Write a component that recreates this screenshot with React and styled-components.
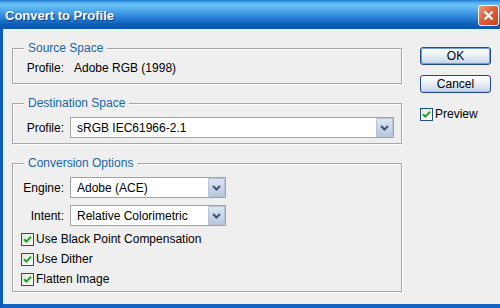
import React from "react";
import styled, { createGlobalStyle } from "styled-components";

const GlobalStyle = createGlobalStyle`
  html, body { margin: 0; padding: 0; background: #efefef; }
  body {
    font-family: "Liberation Sans", Arial, sans-serif;
    font-size: 12px;
    color: #000;
  }
  * { box-sizing: border-box; }
`;

const Window = styled.div`
  width: 500px;
  height: 308px;
  display: flex;
  flex-direction: column;
  overflow: hidden;
  background: #efefef;
`;

const TitleBar = styled.div`
  height: 29px;
  flex: none;
  display: flex;
  align-items: center;
  justify-content: space-between;
  padding: 1px 1px 0 5px;
  background: linear-gradient(
    #1f74d4 0px,
    #4aa6ea 2px,
    #6cc3f4 5px,
    #55b0ee 9px,
    #3b94e0 14px,
    #1f74cc 20px,
    #0c5cb6 25px,
    #0a55aa 29px
  );
`;

const Title = styled.span`
  color: #fff;
  font-weight: bold;
  font-size: 13px;
  letter-spacing: 0;
  text-shadow: 1px 1px 0 #0b3d82;
`;

const CloseButton = styled.div`
  width: 21px;
  height: 21px;
  border: 1px solid #f4f4f4;
  border-radius: 3px;
  background: linear-gradient(135deg, #f09a7e, #e0603e 45%, #c8431f);
  display: flex;
  align-items: center;
  justify-content: center;
  margin-top: 1px;
`;

const Frame = styled.div`
  flex: 1;
  display: flex;
  border-left: 3px solid #0a5cc0;
  border-bottom: 4px solid #1463c4;
  padding-left: 9px;
`;

const LeftCol = styled.div`
  width: 391px;
  padding-top: 19px;
  display: flex;
  flex-direction: column;
  gap: 19px;
`;

const Group = styled.div`
  position: relative;
  height: ${(p) => p.$h}px;
  width: 390px;
  border: 1px solid #a6a6a6;
  box-shadow: 1px 1px 0 #fff, inset 1px 1px 0 #fff;
  padding-top: ${(p) => p.$pt}px;
  padding-right: 7px;
  display: flex;
  flex-direction: column;
`;

const Legend = styled.span`
  position: absolute;
  top: -8px;
  left: 11px;
  padding: 0 4px;
  line-height: 14px;
  background: #efefef;
  color: #1668a8;
`;

const Row = styled.div`
  display: flex;
  align-items: center;
  margin-top: ${(p) => p.$mt || 0}px;
`;

const Label = styled.span`
  width: 51px;
  text-align: right;
  line-height: 14px;
  flex: none;
`;

const Value = styled.span`
  margin-left: 10px;
  line-height: 14px;
`;

const Select = styled.div`
  margin-left: 6px;
  width: ${(p) => p.$w}px;
  height: 21px;
  border: 1px solid #a3a3a3;
  background: #fff;
  display: flex;
  align-items: center;
  justify-content: space-between;
`;

const SelectText = styled.span`
  padding-left: 6px;
  line-height: 14px;
`;

const Arrow = styled.div`
  width: 17px;
  height: 19px;
  margin-right: 0px;
  border: 1px solid #b6c3d6;
  border-radius: 1px;
  background: linear-gradient(#dde6f3, #c6d3e6 60%, #b9c8de);
  display: flex;
  align-items: center;
  justify-content: center;
`;

const CheckList = styled.div`
  margin-top: 3px;
  padding-left: 8px;
  display: flex;
  flex-direction: column;
`;

const CheckRow = styled.label`
  height: 20px;
  display: flex;
  align-items: center;
  gap: 2px;
`;

const Box = styled.span`
  width: 13px;
  height: 13px;
  flex: none;
  border: 1px solid #1c5180;
  background: linear-gradient(135deg, #e4e4df, #fff);
  display: flex;
  align-items: center;
  justify-content: center;
`;

const RightCol = styled.div`
  margin-left: 17px;
  width: 72px;
  padding-top: 18px;
  display: flex;
  flex-direction: column;
  gap: 10px;
`;

const Button = styled.div`
  width: 71px;
  height: 18px;
  border: 1px solid #1d4c8c;
  border-radius: 3px;
  background: linear-gradient(#ffffff, #f1f4f9 35%, #d9e3f0 70%, #c3d2e8);
  box-shadow: ${(p) =>
    p.$default ? "inset 0 0 0 1px #6d9fe0" : "inset 0 -1px 0 #b3c4de"};
  display: flex;
  align-items: center;
  justify-content: center;
  line-height: 14px;
`;

const PreviewRow = styled(CheckRow)`
  margin-top: 1px;
`;

const Chevron = () => (
  <svg width="9" height="6" viewBox="0 0 9 6">
    <path d="M1 1 L4.5 4.5 L8 1" fill="none" stroke="#3c5278" strokeWidth="2" />
  </svg>
);

const Check = () => (
  <svg width="9" height="9" viewBox="0 0 9 9">
    <path d="M1 4.2 L3.3 6.6 L8 1.6" fill="none" stroke="#1ea31e" strokeWidth="2" />
  </svg>
);

const Checkbox = ({ children }) => (
  <CheckRow>
    <Box>
      <Check />
    </Box>
    <span>{children}</span>
  </CheckRow>
);

const Dropdown = ({ w, children }) => (
  <Select $w={w}>
    <SelectText>{children}</SelectText>
    <Arrow>
      <Chevron />
    </Arrow>
  </Select>
);

export default function App() {
  return (
    <>
      <GlobalStyle />
      <Window>
        <TitleBar>
          <Title>Convert to Profile</Title>
          <CloseButton>
            <svg width="11" height="11" viewBox="0 0 11 11">
              <path d="M1.5 1.5 L9.5 9.5 M9.5 1.5 L1.5 9.5" stroke="#fff" strokeWidth="2.2" />
            </svg>
          </CloseButton>
        </TitleBar>
        <Frame>
          <LeftCol>
            <Group $h={36} $pt={12}>
              <Legend>Source Space</Legend>
              <Row>
                <Label>Profile:</Label>
                <Value>Adobe RGB (1998)</Value>
              </Row>
            </Group>
            <Group $h={41} $pt={13}>
              <Legend>Destination Space</Legend>
              <Row>
                <Label>Profile:</Label>
                <Dropdown w={324}>sRGB IEC61966-2.1</Dropdown>
              </Row>
            </Group>
            <Group $h={129} $pt={13}>
              <Legend>Conversion Options</Legend>
              <Row>
                <Label>Engine:</Label>
                <Dropdown w={156}>Adobe (ACE)</Dropdown>
              </Row>
              <Row $mt={7}>
                <Label>Intent:</Label>
                <Dropdown w={156}>Relative Colorimetric</Dropdown>
              </Row>
              <CheckList>
                <Checkbox>Use Black Point Compensation</Checkbox>
                <Checkbox>Use Dither</Checkbox>
                <Checkbox>Flatten Image</Checkbox>
              </CheckList>
            </Group>
          </LeftCol>
          <RightCol>
            <Button $default>OK</Button>
            <Button>Cancel</Button>
            <PreviewRow>
              <Box>
                <Check />
              </Box>
              <span>Preview</span>
            </PreviewRow>
          </RightCol>
        </Frame>
      </Window>
    </>
  );
}
